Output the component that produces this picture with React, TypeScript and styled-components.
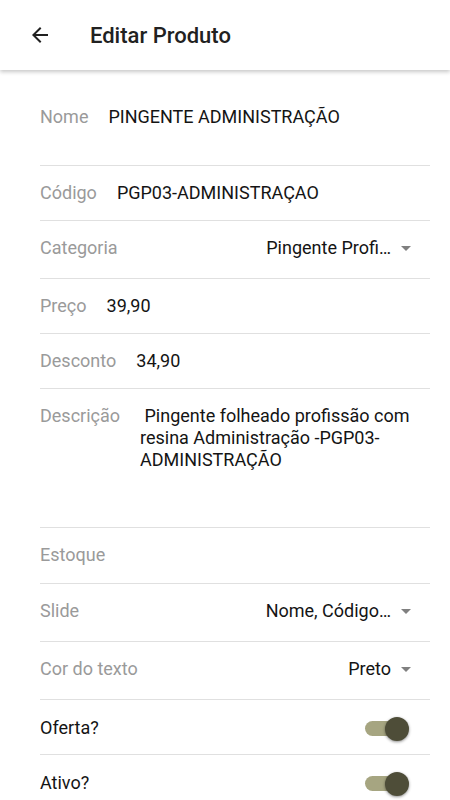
import styled, { createGlobalStyle } from "styled-components";

const GlobalStyle = createGlobalStyle`
  html, body {
    margin: 0;
    padding: 0;
    background: #ffffff;
    font-family: Roboto, "Noto Sans", Arial, sans-serif;
  }
`;

const Page = styled.div`
  width: 450px;
  height: 800px;
  overflow: hidden;
  background: #fff;
`;

const Header = styled.header`
  height: 70px;
  display: flex;
  align-items: center;
  padding-left: 28px;
  box-shadow: 0 2px 4px rgba(0, 0, 0, 0.22);
  position: relative;
  z-index: 1;
  background: #fff;
`;

const BackButton = styled.div`
  width: 24px;
  height: 24px;
  display: flex;
  align-items: center;
  justify-content: center;
  color: #212121;
`;

const Title = styled.h1`
  margin: 0 0 0 38px;
  font-size: 22px;
  font-weight: 500;
  color: #212121;
`;

const Form = styled.div`
  padding: 20px 20px 0 40px;
`;

const Row = styled.div<{ $top?: number; $bottom?: number; $last?: boolean }>`
  display: flex;
  align-items: flex-start;
  padding-top: ${(p) => p.$top ?? 16}px;
  padding-bottom: ${(p) => p.$bottom ?? 16}px;
  border-bottom: ${(p) => (p.$last ? "none" : "1px solid #e0e0e0")};
  font-size: 18px;
  line-height: 22px;
`;

const Label = styled.span`
  color: #9a9a9a;
  flex-shrink: 0;
  margin-right: 20px;
`;

const Value = styled.span`
  color: #141414;
  white-space: pre-wrap;
`;

const Spacer = styled.div`
  flex: 1;
`;

const Select = styled.div`
  display: flex;
  align-items: center;
  color: #141414;
  padding-right: 19px;
`;

const Caret = styled.span`
  width: 0;
  height: 0;
  margin-left: 10px;
  border-left: 5px solid transparent;
  border-right: 5px solid transparent;
  border-top: 5px solid #808080;
`;

const PlainLabel = styled.span`
  color: #141414;
`;

const Switch = styled.div`
  position: relative;
  width: 40px;
  height: 15px;
  margin-right: 25px;
  margin-top: 4px;
  border-radius: 8px;
  background: #a6a581;
`;

const Thumb = styled.div`
  position: absolute;
  right: -4px;
  top: 50%;
  width: 24px;
  height: 24px;
  margin-top: -12px;
  border-radius: 50%;
  background: #4e4d38;
  box-shadow: 0 1px 3px rgba(0, 0, 0, 0.45);
`;

const Field = ({ label, value }: { label: string; value?: string }) => (
  <>
    <Label>{label}</Label>
    {value && <Value>{value}</Value>}
  </>
);

const Dropdown = ({ label, value }: { label: string; value: string }) => (
  <Row $bottom={19}>
    <Label>{label}</Label>
    <Spacer />
    <Select>
      {value}
      <Caret />
    </Select>
  </Row>
);

const Toggle = ({ label, last }: { label: string; last?: boolean }) => (
  <Row $top={17} $bottom={15} $last={last}>
    <PlainLabel>{label}</PlainLabel>
    <Spacer />
    <Switch>
      <Thumb />
    </Switch>
  </Row>
);

export default function App() {
  return (
    <Page>
      <GlobalStyle />
      <Header>
        <BackButton>
          <svg width="24" height="24" viewBox="0 0 24 24">
            <path
              d="M20 11H7.83l5.59-5.59L12 4l-8 8 8 8 1.41-1.41L7.83 13H20v-2z"
              fill="currentColor"
            />
          </svg>
        </BackButton>
        <Title>Editar Produto</Title>
      </Header>
      <Form>
        <Row $top={16} $bottom={37}>
          <Field label="Nome" value="PINGENTE ADMINISTRAÇÃO" />
        </Row>
        <Row>
          <Field label="Código" value="PGP03-ADMINISTRAÇAO" />
        </Row>
        <Dropdown label="Categoria" value="Pingente Profi…" />
        <Row>
          <Field label="Preço" value="39,90" />
        </Row>
        <Row>
          <Field label="Desconto" value="34,90" />
        </Row>
        <Row $bottom={56}>
          <Label>Descrição</Label>
          <Value>{" Pingente folheado profissão com\nresina Administração -PGP03-\nADMINISTRAÇÃO"}</Value>
        </Row>
        <Row $bottom={17}>
          <Field label="Estoque" />
        </Row>
        <Dropdown label="Slide" value="Nome, Código…" />
        <Dropdown label="Cor do texto" value="Preto" />
        <Toggle label="Oferta?" />
        <Toggle label="Ativo?" last />
      </Form>
    </Page>
  );
}
